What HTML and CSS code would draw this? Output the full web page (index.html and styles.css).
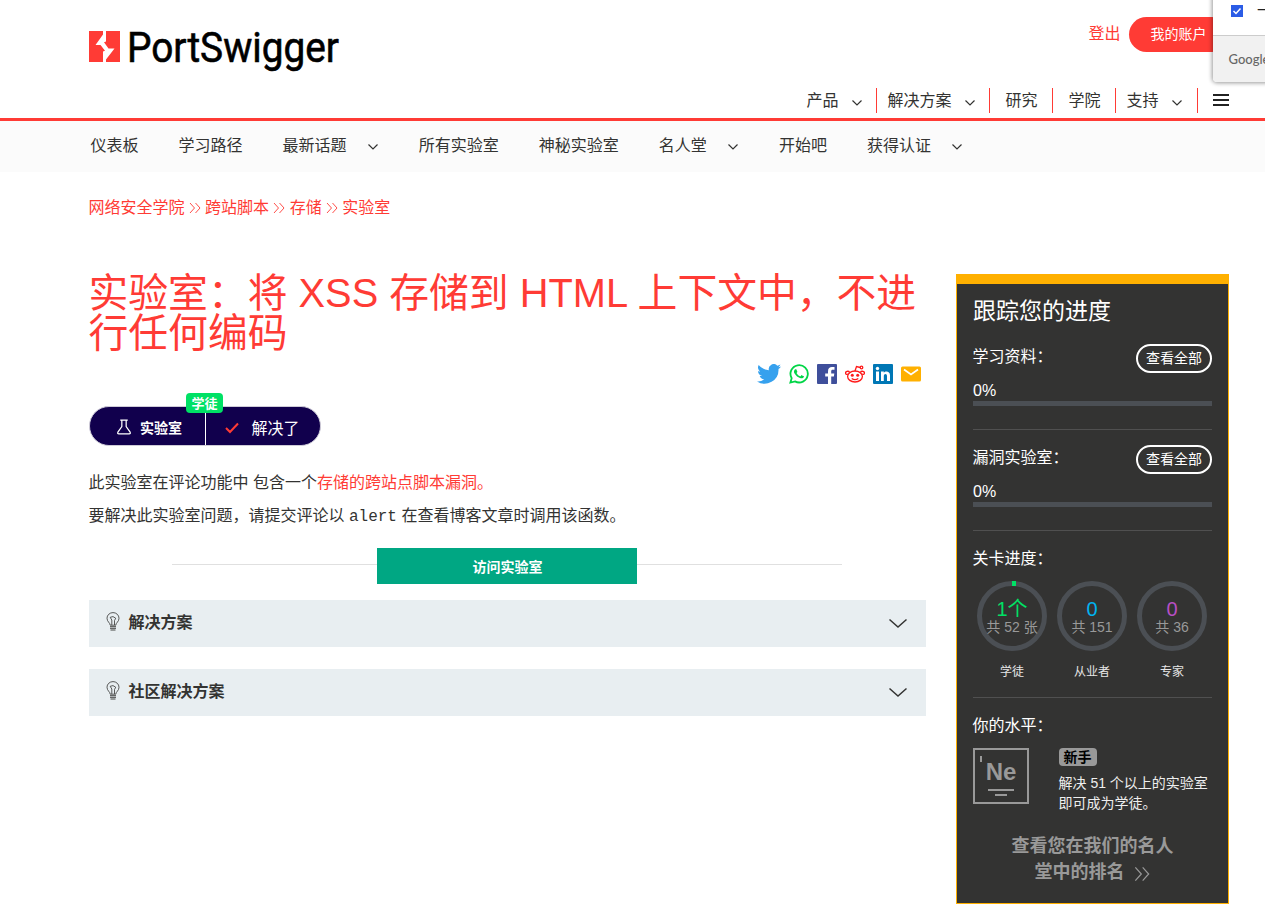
FILE: index.html
```html
<!DOCTYPE html>
<html lang="zh-CN">
<head>
<meta charset="utf-8">
<title>实验室</title>
<link rel="stylesheet" href="styles.css">
</head>
<body>
<svg class="defs" width="0" height="0">
  <symbol id="chev" viewBox="0 0 12 8"><path d="M1.500 1.500 6 6 10.500 1.500" fill="none" stroke="currentColor" stroke-width="1.200"/></symbol>
  <symbol id="dbl" viewBox="0 0 12 12"><path d="M1 1 5.500 6 1 11M6.500 1 11 6 6.500 11" fill="none" stroke="currentColor" stroke-width=".9"/></symbol>
  <symbol id="bulb" viewBox="0 0 14 20"><path d="M4.200 13.200C4.200 10.800 1 9.800 1 6.200a6 5.600 0 0 1 12 0c0 3.600-3.200 4.600-3.200 7zM5.800 13V8L4.200 5.300 7 4.600 9.700 6.200 8.500 8.600V13" fill="none" stroke="currentColor" stroke-width=".8"/><path d="M4 14.700h6M4 16.300h6M4.500 18h5" stroke="currentColor" stroke-width=".9"/></symbol>
</svg>

<header class="header">
  <svg class="logo" viewBox="0 0 252 44">
    <path d="M0 3h31v31H0z" fill="#ff3b35"/>
    <path d="M14 3h3v10.500l-2 .7 4.500 6.300h6L17 31.500V34h-3V23.500l2-.8-4.500-5.700h-5L14 6.500z" fill="#fff"/>
    <text class="logo-text" x="38" y="34" textLength="212" lengthAdjust="spacingAndGlyphs">PortSwigger</text>
  </svg>
  <div class="header-right">
    <div class="account"><a class="logout">登出</a><a class="account-btn">我的账户</a></div>
    <nav class="main-nav">
      <a class="has-menu">产品<svg><use href="#chev"/></svg></a>
      <a class="has-menu">解决方案<svg><use href="#chev"/></svg></a>
      <a class="plain">研究</a>
      <a class="plain">学院</a>
      <a class="has-menu support">支持<svg><use href="#chev"/></svg></a>
      <span class="burger"><i></i><i></i><i></i></span>
    </nav>
  </div>
</header>
<aside class="popup">
  <div class="popup-row"><svg width="12" height="12"><path d="M0 0h12v12H0z" fill="#2b5ce6"/><path d="M2.500 6 5 8.500 9.500 3.500" fill="none" stroke="#fff" stroke-width="1.500"/></svg><span>一</span></div>
  <div class="popup-foot">Google</div>
</aside>

<nav class="sub-nav">
  <a>仪表板</a><a>学习路径</a><a>最新话题<svg><use href="#chev"/></svg></a><a>所有实验室</a><a>神秘实验室</a><a>名人堂<svg><use href="#chev"/></svg></a><a>开始吧</a><a>获得认证<svg><use href="#chev"/></svg></a>
</nav>

<div class="crumbs"><a>网络安全学院</a><svg><use href="#dbl"/></svg><a>跨站脚本</a><svg><use href="#dbl"/></svg><a>存储</a><svg><use href="#dbl"/></svg><a>实验室</a></div>

<div class="page">
  <main class="content">
    <h1>实验室：将 XSS 存储到 HTML 上下文中，不进行任何编码</h1>
    <div class="social">
      <svg class="bird" viewBox="0 0 24 20"><path fill="#36a1ee" d="M24 2.400c-.9.400-1.800.7-2.800.8 1-.6 1.800-1.600 2.200-2.700-1 .6-2 1-3.100 1.200A4.900 4.900 0 0 0 11.900 6.200 14 14 0 0 1 1.700.9a4.900 4.900 0 0 0 1.500 6.600c-.8 0-1.600-.2-2.200-.6v.1c0 2.400 1.700 4.400 3.900 4.800-.7.200-1.500.2-2.200.1.600 2 2.400 3.400 4.600 3.400A9.900 9.900 0 0 1 0 17.500 14 14 0 0 0 21.500 5c1-.7 1.800-1.600 2.500-2.600z"/></svg>
      <svg viewBox="0 0 24 24"><path fill="none" stroke="#00d546" stroke-width="2.200" d="M1.700 22.300 3.200 17A10.400 10.400 0 1 1 7.200 20.900z"/><path fill="#00d546" d="M17.500 14.400c-.3-.2-1.800-.9-2-1-.3-.1-.5-.1-.7.200l-.9 1.100c-.2.200-.4.200-.7.100-1.600-.8-2.900-1.800-4-3.700-.2-.3 0-.5.100-.7l.7-.9-.1-.5-.9-2.200c-.2-.6-.5-.5-.7-.5-.6 0-1 0-1.500.5-1.400 1.500-.9 3.600.3 5.200 1.500 2.200 3.300 3.900 6.100 4.800 1.700.6 2.600.4 3.500-.1.800-.4 1.300-1.100 1.300-2z"/></svg>
      <svg viewBox="0 0 20 20"><path fill="#3f4f9b" d="M1 0h18q1 0 1 1v18q0 1-1 1H1q-1 0-1-1V1Q0 0 1 0z"/><path fill="#fff" d="M11 20v-7.500H8.200v-3H11V7.200c0-2.800 1.700-4.200 4-4.200h2.500v2.800h-1.700c-1.300 0-1.600.6-1.600 1.500v2.200h3.100l-.4 3h-2.700V20z"/></svg>
      <svg viewBox="0 0 20 20"><g fill="none" stroke="#ff1a1a" stroke-width="1.300"><ellipse cx="10" cy="12.500" rx="7.400" ry="5.500"/><path d="M10 7 11.500 2.500 15.300 3.500M3.300 10C0 11.500-.2 8 2 7.300q2-.3 2.500 1M16.700 10c3.300 1.500 3.500-2 1.300-2.700q-2-.3-2.500 1M6.700 14.500q3.300 2.400 6.600 0"/><circle cx="16.500" cy="3.500" r="1.300"/></g><circle cx="7.300" cy="11.200" r="1.500" fill="#ff1a1a"/><circle cx="12.700" cy="11.200" r="1.500" fill="#ff1a1a"/></svg>
      <svg viewBox="0 0 20 20"><path fill="#0077b5" d="M1 0h18q1 0 1 1v18q0 1-1 1H1q-1 0-1-1V1Q0 0 1 0z"/><path fill="#fff" d="M3 7.500h3V17H3zM8 7.500h2.800v1.300c1.400-2.300 6.200-2 6.200 2.400V17h-3v-5c0-3-3.200-2.600-3.200 0v5H8z"/><circle cx="4.500" cy="4.500" r="1.700" fill="#fff"/></svg>
      <svg viewBox="0 0 20 20"><rect y="2.500" width="20" height="15" rx="1.500" fill="#ffb000"/><path d="M3 5.500 10 10.500 17 5.500" fill="none" stroke="#fff" stroke-width="1.700"/></svg>
    </div>

    <div class="status">
      <span class="tag">学徒</span>
      <div class="status-left"><svg width="16" height="17" viewBox="0 0 16 17"><path d="M4 1.200h8M5.700 1.200V8L1.500 14q-.8 1.700 1 1.700h11q1.800 0 1-1.700L10.300 8V1.200" fill="none" stroke="#fff" stroke-width="1.300"/></svg><b>实验室</b></div>
      <div class="status-right"><svg width="14" height="12" viewBox="0 0 14 12"><path d="M1 6 5 10 13 1.500" fill="none" stroke="#ff3b35" stroke-width="2"/></svg><span>解决了</span></div>
    </div>

    <p>此实验室在评论功能中 包含一个<a>存储的跨站点脚本漏洞。</a></p>
    <p>要解决此实验室问题，请提交评论以 <code>alert</code> 在查看博客文章时调用该函数。</p>

    <div class="launch"><hr><a>访问实验室</a><hr></div>

    <section class="fold"><svg class="bulb"><use href="#bulb"/></svg><b>解决方案</b><svg class="fold-arrow" viewBox="0 0 20 11"><path d="M1.500 1.500 10 9 18.500 1.500" fill="none" stroke="#333332" stroke-width="1.500"/></svg></section>
    <section class="fold"><svg class="bulb"><use href="#bulb"/></svg><b>社区解决方案</b><svg class="fold-arrow" viewBox="0 0 20 11"><path d="M1.500 1.500 10 9 18.500 1.500" fill="none" stroke="#333332" stroke-width="1.500"/></svg></section>
  </main>

  <aside class="progress">
    <h2>跟踪您的进度</h2>
    <section class="track first">
      <div class="track-head"><span>学习资料：</span><a>查看全部</a></div>
      <div class="percent">0%</div><div class="bar"></div>
    </section>
    <section class="track">
      <div class="track-head"><span>漏洞实验室：</span><a>查看全部</a></div>
      <div class="percent">0%</div><div class="bar"></div>
    </section>
    <section class="levels">
      <div class="label">关卡进度：</div>
      <div class="rings">
        <div class="level"><div class="ring started"><b class="green">1个</b><span>共 52 张</span></div><em>学徒</em></div>
        <div class="level"><div class="ring"><b class="blue">0</b><span>共 151</span></div><em>从业者</em></div>
        <div class="level"><div class="ring"><b class="purple">0</b><span>共 36</span></div><em>专家</em></div>
      </div>
    </section>
    <section class="rank">
      <div class="label">你的水平：</div>
      <div class="rank-row">
        <div class="element"><i class="tick"></i><b>Ne</b><i class="l1"></i><i class="l2"></i></div>
        <div class="rank-info"><span class="newbie">新手</span><p>解决 51 个以上的实验室即可成为学徒。</p></div>
      </div>
    </section>
    <a class="hall">查看您在我们的名人<br>堂中的排名 <svg><use href="#dbl"/></svg></a>
  </aside>
</div>
</body>
</html>
```
FILE: styles.css
```css
* { box-sizing: border-box; }
body {
  margin: 0;
  height: 905px;
  overflow: hidden;
  background: #fff;
  color: #333332;
  font: 16px/24px "Liberation Sans", "Noto Sans CJK SC", sans-serif;
}
svg { display: block; flex: none; }
.defs { position: absolute; }

.header {
  display: flex;
  justify-content: space-between;
  height: 121px;
  padding: 0 36px 0 89px;
  border-bottom: 3px solid #ff3b35;
}
.logo { width: 252px; height: 44px; margin-top: 28px; overflow: visible; }
.logo-text { font-family: Roboto, sans-serif; font-size: 42px; font-weight: 400; fill: #000; stroke: #000; stroke-width: .6px; }
.header-right { display: flex; flex-direction: column; align-items: flex-end; }
.account { display: flex; align-items: center; margin-top: 17px; height: 35px; }
.logout { color: #ff3b35; margin: -2px 8.500px 0 0; }
.account-btn {
  width: 100px;
  height: 35px;
  padding-left: 21.500px;
  border-radius: 18px;
  background: #ff3b35;
  color: #fff;
  font-size: 14px;
  line-height: 35px;
}
.main-nav { display: flex; height: 25px; margin-top: 36px; line-height: 25px; }
.main-nav a { display: flex; align-items: center; border-right: 1px solid #ff3b35; padding: 0 13px 0 10.500px; }
.main-nav a svg { width: 12px; height: 8px; margin: 4px 0 0 12.500px; }
.main-nav .plain { padding: 0 14.500px 0 15.500px; }
.main-nav .support { padding-right: 14px; }
.burger { display: flex; flex-direction: column; gap: 3px; width: 16px; margin: 6px 0 0 15px; }
.burger i { height: 2px; background: #222; }

.popup {
  position: absolute;
  left: 1213px;
  top: -10px;
  width: 80px;
  height: 92px;
  border-radius: 4px;
  background: #fff;
  box-shadow: 0 0 4px 1px rgba(0,0,0,.4);
  overflow: hidden;
}
.popup-row { display: flex; gap: 14px; height: 45px; padding: 15px 0 0 18px; color: #222; line-height: 12px; }
.popup-foot { height: 47px; padding-left: 15.500px; border-top: 1px solid #ccc; background: #f1f1f1; color: #666; font: 500 13px/46px Lato, sans-serif; }

.sub-nav { display: flex; gap: 40px; height: 51px; padding-left: 90.500px; background: #fbfbfb; line-height: 50px; }
.sub-nav a { display: flex; }
.sub-nav svg { width: 12px; height: 8px; margin: 22px 0 0 20.200px; }

.crumbs { display: flex; align-items: center; height: 24px; margin: 24px 0 0 88.500px; color: #ff3b35; }
.crumbs svg { width: 12px; height: 12px; margin: -1px 4.300px 0; }

.page { display: flex; justify-content: space-between; padding: 0 36px 0 88.500px; margin-top: 54px; }
.content { width: 837px; }
h1 { margin: -1px 0 0; color: #ff3b35; font-size: 39.800px; line-height: 40px; font-weight: 400; }
.social { display: flex; justify-content: flex-end; gap: 8px; height: 20px; margin: 11px 4.500px 0 0; }
.social svg { width: 20px; height: 20px; }
.social .bird { width: 24px; }

.status {
  position: relative;
  display: flex;
  width: 232px;
  height: 40px;
  margin: 22px 0 0 .5px;
  border: 1px solid #cfccd8;
  border-radius: 20px;
  background: #11004d;
  color: #fff;
}
.status-left { display: flex; align-items: center; width: 116px; padding: 3px 0 0 26px; gap: 8px; font-size: 14px; border-right: 1px solid #fff; }
.status-left svg { height: 16px; }
.status-right { display: flex; align-items: center; padding: 5px 0 0 19px; gap: 12.500px; }
.status svg { margin-top: -1px; }
.tag {
  position: absolute;
  left: 96px;
  top: -14px;
  width: 37px;
  height: 20px;
  border-radius: 4px;
  background: #00e165;
  font-size: 13px;
  font-weight: 700;
  line-height: 22px;
  text-align: center;
}
.content > p { margin: 9px 0 0; }
.content > .status + p { margin-top: 25px; }
.content p a { color: #ff3b35; }
code { font: 16px "Liberation Mono", monospace; }

.launch { display: flex; align-items: center; width: 670px; height: 36px; margin: 20px auto 16px 83.500px; }
.launch hr { flex: 1; height: 1px; margin: -3px 0 0; border: 0; background: #e0e0e0; }
.launch a { width: 260px; height: 36px; padding-left: 1px; background: #00a783; color: #fff; font-size: 14px; font-weight: 700; line-height: 38px; text-align: center; }

.fold { display: flex; align-items: center; height: 47px; margin: 0 0 22px .5px; padding: 0 18px 1px 17px; background: #e8eef1; }
.bulb { width: 14px; height: 20px; margin: -2px 8.500px 0 0; }
.fold-arrow { width: 20px; height: 11px; margin: 0 0 0 auto; }

.progress {
  width: 273px;
  height: 630px;
  padding: 0 16px;
  border: 1px solid #ffb000;
  border-top-width: 10px;
  background: #333332;
  color: #fff;
}
h2 { margin: 13px 0 0; font-size: 23px; line-height: 28px; font-weight: 400; }
.track { height: 101px; padding-top: 15px; border-bottom: 1px solid #505050; }
.track.first { margin-top: 4px; }
.track-head { display: flex; justify-content: space-between; align-items: flex-start; height: 29px; }
.track-head span, .label { line-height: 26px; margin-left: -.5px; }
.track-head a { width: 76px; height: 29px; border: 2px solid #fff; border-radius: 15px; font-size: 14px; line-height: 25px; text-align: center; }
.percent { margin-top: 5px; height: 23px; line-height: 26px; }
.bar { height: 5px; background: #4b4f54; }
.levels { height: 167px; padding-top: 15px; border-bottom: 1px solid #505050; }
.rings { display: flex; gap: 10px; margin: 9px 4px 0; }
.level { width: 70px; text-align: center; }
.ring { position: relative; width: 70px; height: 70px; padding-top: 13px; border: 5px solid #4b4f54; border-radius: 50%; color: #999; font-size: 14px; line-height: 17px; white-space: nowrap; }
.ring b { display: block; height: 20px; font-size: 20px; font-weight: 400; line-height: 20px; }
.ring span { display: flex; justify-content: center; margin: 0 -5px; white-space: pre; }
.ring.started::before { content: ""; position: absolute; left: 30px; top: -5px; width: 4px; height: 5px; background: #00e165; }
.green { color: #00e165; }
.blue { color: #00b4f0; }
.purple { color: #b84fc4; }
.level em { display: block; margin-top: 9px; color: #e6e6e6; font-size: 12px; font-style: normal; }
.rank { padding-top: 15px; }
.rank-row { display: flex; gap: 30px; margin-top: 9px; }
.element { position: relative; display: flex; flex-direction: column; align-items: center; width: 56px; height: 56px; padding-top: 10px; border: 2px solid #999; color: #999; flex: none; }
.element b { font-size: 24px; line-height: 24px; }
.element .l1 { width: 26px; height: 2px; margin-top: 5px; background: #999; }
.element .l2 { width: 12px; height: 2px; margin-top: 3px; background: #999; }
.element .tick { position: absolute; left: 5px; top: 6px; width: 2px; height: 6px; background: #999; }
.rank-info { font-size: 14px; line-height: 20px; flex: 1; margin: 0 -4px 0 -.5px; }
.newbie { display: block; width: 38px; height: 18px; border-radius: 4px; background: #999; color: #000; font-weight: 700; line-height: 19px; text-align: center; }
.rank-info p { margin: 7px 0 0; color: #eee; }
.hall { display: block; margin: 20px 0 0; color: #999; font-size: 18px; font-weight: 700; line-height: 26px; text-align: center; }
.hall svg { display: inline-block; width: 18px; height: 16px; margin-left: 3px; vertical-align: -4px; }
```
